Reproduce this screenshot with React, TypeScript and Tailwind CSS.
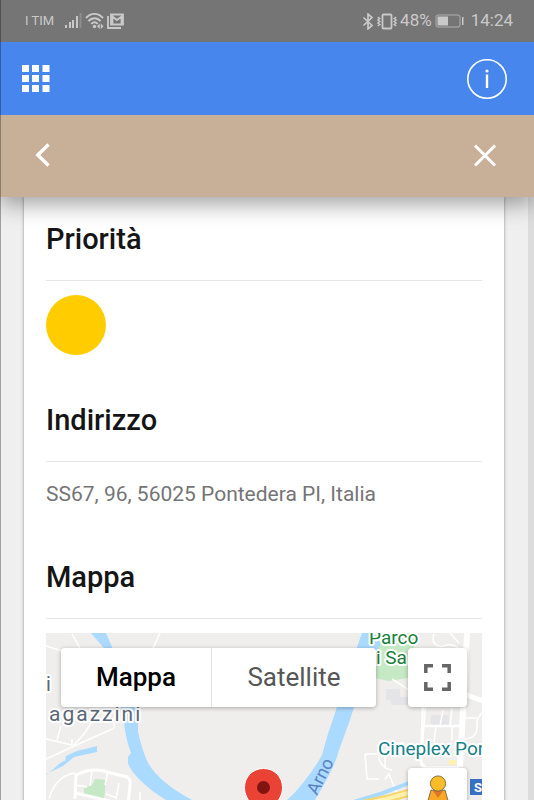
import React, { FC, ReactNode } from "react";

const StatusBar: FC = () => (
  <div className="flex h-[42px] shrink-0 items-center justify-between border-l border-black/30 bg-[#757575] pr-[21px] pl-6 text-[#c9c9c9]">
    <div className="flex items-center gap-[3px]">
      <span className="mr-2 text-[13px]">I TIM</span>
      <svg width="17" height="16" viewBox="0 0 17 16" fill="currentColor">
        <path d="M0 12h2v3H0zM4 9h2v6H4zM7 7h2v8H7zM11 3h2v12h-2z" />
        <path d="M14.5 0h2v15h-2z" opacity=".3" />
      </svg>
      <svg width="19" height="16" viewBox="0 0 19 16" fill="none" stroke="currentColor" strokeWidth="1.9">
        <path d="M1 5C6-.5 13-.5 18 5M3.5 8.2c3.5-4 8.5-4 12 0M6.3 11c2-2.300 4.400-2.300 6.400 0" />
        <circle cx="9.500" cy="13.500" r="1.700" fill="currentColor" stroke="none" />
        <path d="M12 13.200l2.700-2.700v5.400zM18.500 13.200l-2.700-2.700v5.400z" fill="currentColor" stroke="none" />
      </svg>
      <svg width="17" height="16" viewBox="0 0 17 16" fill="none" stroke="currentColor" strokeWidth="1.800">
        <path d="M1 3v12h13" />
        <path d="M4 1.500h12v10H4zM5.500 11V3.500L10 7l4.500-3.500V11" />
      </svg>
    </div>
    <div className="flex items-center gap-[3px]">
      <svg width="12" height="17" viewBox="0 0 12 17" fill="none" stroke="currentColor" strokeWidth="1.700">
        <path d="M1.500 4.500l8.500 8-4 3.500V1l4 3.500-8.500 8" />
      </svg>
      <svg width="20" height="17" viewBox="0 0 20 17" fill="none" stroke="currentColor" strokeWidth="1.800">
        <rect x="5.500" y="1.500" width="9" height="14" rx="1" />
        <path d="M.8 4l2 1.500-2 1.500 2 1.500-2 1.500 2 1.500-2 1.500M19.200 4l-2 1.500 2 1.500-2 1.500 2 1.500-2 1.500 2 1.500" strokeWidth="1.500" />
      </svg>
      <span className="text-[17px]">48%</span>
      <svg width="29" height="14" viewBox="0 0 29 14" fill="currentColor">
        <rect x="1" y="1" width="24" height="12" rx="2" fill="none" stroke="currentColor" opacity=".7" />
        <path d="M2.500 2.500H13v9H2.500zM27 3h1.500v8H27z" />
      </svg>
      <span className="ml-1 text-[17px]">14:24</span>
    </div>
  </div>
);

const Header: FC = () => (
  <header className="z-20 flex h-[73px] shrink-0 items-center justify-between border-l border-black/30 bg-[#4786ec] pr-[27px] pl-[21px] text-white">
    <button type="button" aria-label="Menu">
      <svg width="28" height="28" viewBox="0 0 28 28" fill="currentColor">
        <path d="M0 0h7v7H0zM10 0h7v7h-7zM20.500 0h7v7h-7zM0 10h7v7H0zM10 10h7v7h-7zM20.500 10h7v7h-7zM0 20h7v7H0zM10 20h7v7h-7zM20.500 20h7v7h-7z" />
      </svg>
    </button>
    <button type="button" aria-label="Informazioni">
      <svg width="40" height="40" viewBox="0 0 40 40" fill="none" stroke="currentColor">
        <circle cx="20" cy="20" r="19.200" strokeWidth="1.600" />
        <path d="M20 15.500V29" strokeWidth="2.400" />
        <circle cx="20" cy="12" r="1.600" fill="currentColor" stroke="none" />
      </svg>
    </button>
  </header>
);

const Toolbar: FC = () => (
  <nav className="z-10 flex h-[82px] shrink-0 items-center justify-between border-l border-black/30 bg-[#c8b098] pr-[37px] pb-0.5 pl-[34px] text-white shadow-[0_6px_22px_rgba(0,0,0,0.4)]">
    <button type="button" aria-label="Indietro">
      <svg width="16" height="24" viewBox="0 0 16 24" fill="none" stroke="currentColor" strokeWidth="3.400">
        <path d="M13.500 1.500L2.800 12l10.700 10.500" />
      </svg>
    </button>
    <button type="button" aria-label="Chiudi">
      <svg width="24" height="24" viewBox="0 0 24 24" fill="none" stroke="currentColor" strokeWidth="3">
        <path d="M2 2.500l20 20M22 2.500l-20 20" />
      </svg>
    </button>
  </nav>
);

const Section: FC<{ title: string; children: ReactNode }> = ({ title, children }) => (
  <section>
    <h2 className="border-b border-[#e6e6e6] pb-[23px] text-[29px] leading-9 font-medium text-[#151515]">
      {title}
    </h2>
    <div className="pt-3.5">{children}</div>
  </section>
);

const MapDrawing: FC = () => (
  <svg
    className="absolute inset-0 h-full w-full"
    viewBox="46 633 436 300"
    preserveAspectRatio="xMidYMin slice"
    fill="none"
  >
    {/* parks */}
    <path d="M374 633h43l-9 45-19 3-14-3-15-4z" fill="#c5e8c5" />
    <path d="M84 788l8-3 3-6 11 1-2 19-20-2z" fill="#c5e8c5" />
    {/* built-up area */}
    <path d="M386 689h14v8h8v8h-17v-5h-5zM431 715h18v12h-18z" fill="#e5e5e8" />
    {/* minor streets */}
    <g stroke="#fff" strokeWidth="1.500">
      <path d="M72 634l8 14M160 633l-8 17M46 646l16 5M46 759l26-12 40-18q4-2 1-7M46 739l26 6M57 740l4-14M72 747l12-13 11-17M72 745v-6" />
      <path d="M49 799c4-16 15-25 26-26M92 770l-2 16M108 771l-3 14M106 794l11 4M75 785l12 2M119 783l-3 16M140 792v12" />
      <path d="M434 634c-3 8 2 14 10 12 10-4 14 3 17 4M450 633l9 10M392 679l11 7 8 6M426 700l-5 64M443 710l-3 16M452 708l-2 18M436 726l-2 16M452 726v14M465 718h12M465 739c11-1 13-7 12-19l6-9" />
      <path d="M365 754h20v13M365 754l2 25h12M378 754c1 9 5 15 14 16M390 743h13v8M385 779l4-5 8 20" />
    </g>
    <path d="M423 700l-2 64M421 726h39" stroke="#fff" strokeWidth="2.500" />
    <path d="M421 764l5 4h34" stroke="#fff" strokeWidth="4" />
    <path d="M75 799l1-24q17-9 35-2l16 4q4 2 3 8l-2 20" stroke="#fff" strokeWidth="3" />
    <path d="M75 793l35 8" stroke="#fff" strokeWidth="3" />
    <path d="M467 633l-3 58-4 76" stroke="#fff" strokeWidth="6" />
    <path d="M464 694l19 7" stroke="#fff" strokeWidth="5" />
    {/* river */}
    <path
      d="M91 633H106L112 647 122 680 138 707V732Q142 750 148 763Q160 783 192 800Q239 820 287 800Q296 792 303 783Q315 768 322 755L327 737 337 707 357 647 362 633H385L377 652 362 680 354 707 350 720 339 750Q336 762 328 777Q322 788 315 800Q240 870 166 800Q151 791 140 780Q130 770 128 763V757L131 753Q126 740 124 723L121 707 114 660z"
      fill="#aadaff"
    />
    <path d="M46 775c13-10 15-14 19-14l1-5 11-5 20-5v6l-23 5-11 9-17 8z" fill="#aadaff" />
    <path d="M350 803l30-9 29-11" stroke="#aadaff" strokeWidth="4" />
    <path d="M358 805l28-6 26-7" stroke="#f8d56b" strokeWidth="8" />
    <path d="M358 805l28-6 26-7" stroke="#fff2af" strokeWidth="4" />
    <path d="M449 760h7v5h-7z" fill="#fff2af" />
    {/* labels */}
    <g className="stroke-white" strokeWidth="4" paintOrder="stroke" strokeLinejoin="round">
      <text x="46" y="691" fontSize="20" className="fill-[#5b6876]">i</text>
      <text x="49" y="721" fontSize="21" className="fill-[#5b6876] tracking-[2px]">agazzini</text>
      <text x="369" y="644" fontSize="19" className="fill-[#188038]">Parco</text>
      <text x="376" y="664" fontSize="19" className="fill-[#188038]">i Sa</text>
      <text x="378" y="755" fontSize="19" className="fill-[#158087]">Cineplex Pon</text>
    </g>
    <text x="317" y="796" fontSize="18" transform="rotate(-63 317 796)" className="fill-[#5c82c4]">Arno</text>
    <path d="M470 779h30v16h-30z" fill="#3871c2" />
    <text x="474" y="792" fontSize="13" className="fill-white font-bold">S</text>
    {/* marker */}
    <path d="M263.500 768.500c-11 0-19 8.500-19 19 0 15 15 20 19 42 4-22 19-27 19-42 0-10.500-8-19-19-19z" fill="#ea4335" stroke="#fff" />
    <circle cx="263.500" cy="787.500" r="6.500" fill="#811411" />
  </svg>
);

const MapView: FC = () => (
  <div className="relative h-[300px] overflow-hidden bg-[#efeeec]">
    <MapDrawing />
    <div className="relative flex items-start justify-between p-[15px]">
      <div className="flex h-[59px] overflow-hidden rounded-sm text-[26px] shadow-[0_1px_4px_rgba(0,0,0,0.3)]">
        <button type="button" className="w-[150px] bg-white font-medium text-black">
          Mappa
        </button>
        <button type="button" className="w-[165px] border-l border-[#e6e6e6] bg-white text-[#565656]">
          Satellite
        </button>
      </div>
      <div className="flex flex-col gap-[61px]">
        <button
          type="button"
          aria-label="Schermo intero"
          className="flex size-[59px] items-center justify-center rounded-sm bg-white shadow-[0_1px_4px_rgba(0,0,0,0.3)]"
        >
          <svg width="27" height="27" viewBox="0 0 27 27" fill="none" stroke="#666" strokeWidth="3.500">
            <path d="M1.800 9V1.800H9M18 1.800h7.200V9M25.200 18v7.200H18M9 25.200H1.800V18" />
          </svg>
        </button>
        <button
          type="button"
          aria-label="Street View"
          className="flex size-[59px] items-start justify-center rounded-sm bg-white pt-[7px] shadow-[0_1px_4px_rgba(0,0,0,0.3)]"
        >
          <svg width="24" height="46" viewBox="0 0 24 46" stroke="#6b5528" strokeWidth=".8">
            <path d="M5 15q7 3 14 0l4 14-3 1-2 14H6L4 30l-3-1z" fill="#f9a825" />
            <path d="M7 16h10l-5 7z" fill="#e0762b" stroke="none" />
            <circle cx="12" cy="8.500" r="7.600" fill="#fbbc2c" />
          </svg>
        </button>
      </div>
    </div>
  </div>
);

const App: FC = () => {
  return (
    <div className="flex h-screen flex-col overflow-hidden font-[Roboto,sans-serif]">
      <StatusBar />
      <Header />
      <Toolbar />
      <main className="min-h-0 flex-1 overflow-hidden border-r-[6px] border-l border-r-[#dcdcdc] border-l-[#a0a0a0] bg-[#efefef] pr-6 pl-[23px]">
        <div className="flex flex-col gap-[47px] bg-white px-[22px] py-6 shadow-[0_0_3px_rgba(0,0,0,0.4)]">
          <Section title="Priorità">
            <div className="size-[60px] rounded-full bg-[#ffcc00]" />
          </Section>
          <Section title="Indirizzo">
            <p className="text-[21px] leading-9 text-[#757575]">SS67, 96, 56025 Pontedera PI, Italia</p>
          </Section>
          <Section title="Mappa">
            <MapView />
          </Section>
        </div>
      </main>
    </div>
  );
};

export default App;
